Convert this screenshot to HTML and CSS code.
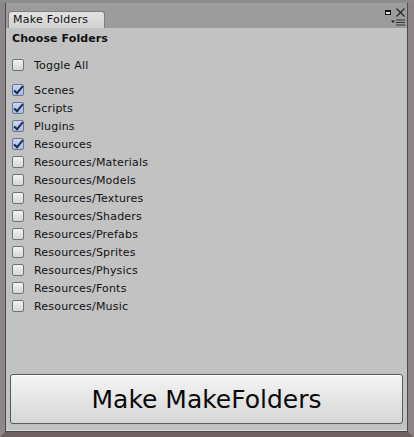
FILE: index.html
```html
<!DOCTYPE html>
<html>
<head>
<meta charset="utf-8">
<link rel="stylesheet" href="styles.css">
</head>
<body>
<div class="window">
  <div class="tabbar">
    <div class="tab">Make Folders</div>
    <div class="controls">
      <div class="ctl-top">
        <span class="max"></span>
        <svg class="close" width="9" height="9" viewBox="0 0 9 9"><path d="M0.5 0.5L8.5 8.5M8.5 0.5L0.5 8.5" stroke="#222" stroke-width="1.1"/></svg>
      </div>
      <svg class="menu" width="14" height="7" viewBox="0 0 14 7"><path d="M0 1.5h4l-2 2.5z" fill="#222"/><path d="M5 1h9M5 3.5h9M5 6h9" stroke="#333" stroke-width="1"/></svg>
    </div>
  </div>
  <div class="content">
    <div class="title">Choose Folders</div>
    <div class="row toggle"><span class="cb"></span><span>Toggle All</span></div>
    <div class="list">
      <div class="row"><span class="cb on"></span><span>Scenes</span></div>
      <div class="row"><span class="cb on"></span><span>Scripts</span></div>
      <div class="row"><span class="cb on"></span><span>Plugins</span></div>
      <div class="row"><span class="cb on"></span><span>Resources</span></div>
      <div class="row"><span class="cb"></span><span>Resources/Materials</span></div>
      <div class="row"><span class="cb"></span><span>Resources/Models</span></div>
      <div class="row"><span class="cb"></span><span>Resources/Textures</span></div>
      <div class="row"><span class="cb"></span><span>Resources/Shaders</span></div>
      <div class="row"><span class="cb"></span><span>Resources/Prefabs</span></div>
      <div class="row"><span class="cb"></span><span>Resources/Sprites</span></div>
      <div class="row"><span class="cb"></span><span>Resources/Physics</span></div>
      <div class="row"><span class="cb"></span><span>Resources/Fonts</span></div>
      <div class="row"><span class="cb"></span><span>Resources/Music</span></div>
    </div>
    <div class="spacer"></div>
    <div class="btn">Make MakeFolders</div>
  </div>
</div>
</body>
</html>
```
FILE: styles.css
```css
html, body { margin: 0; padding: 0; }
body { width: 414px; height: 437px; overflow: hidden; background: #7c7274; }

.window {
  box-sizing: border-box;
  width: 414px;
  height: 437px;
  display: flex;
  flex-direction: column;
  background: #8a8487;
  border-top: 3px solid #8c8c8c;
  border-left: 5px solid #8d878b;
  border-right: 6px solid #8e8487;
  border-bottom: 5px solid #6f6162;
  font-family: "DejaVu Sans", Verdana, sans-serif;
  color: #111;
}

.tabbar {
  height: 25px;
  background: #9c9c9c;
  border-left: 1px solid #4a4a4a;
  border-right: 1px solid #4a4a4a;
  display: flex;
  align-items: flex-end;
  padding-left: 2px;
  position: relative;
}

.tab {
  box-sizing: border-box;
  width: 97px;
  height: 17px;
  background: linear-gradient(#e2e2e2, #d2d2d2);
  border: 1px solid #7e7e7e;
  border-bottom: none;
  border-radius: 3px 3px 0 0;
  font-size: 11px;
  line-height: 16px;
  padding-left: 4px;
  letter-spacing: 0.25px;
  color: #111;
}

.controls {
  position: absolute;
  right: 2px;
  top: 5px;
  width: 22px;
  display: flex;
  flex-direction: column;
  align-items: flex-end;
  gap: 2px;
}
.ctl-top { display: flex; align-items: center; gap: 5px; }
.max {
  display: block;
  box-sizing: border-box;
  width: 6px;
  height: 5px;
  border: 1px solid #111;
  border-top-width: 2px;
  background: #ddd;
}
.close { display: block; }
.menu { display: block; }

.content {
  flex: 1;
  background: #c2c2c2;
  border-left: 1px solid #4a4a4a;
  border-right: 1px solid #4a4a4a;
  border-bottom: 1px solid #4a4a4a;
  display: flex;
  flex-direction: column;
  padding: 3px 4px 7px 3px;
  box-shadow: inset 0 -1px 0 #dcdcdc;
}

.title {
  font-weight: bold;
  font-size: 11px;
  line-height: 16px;
  padding-left: 3px;
  letter-spacing: 0.1px;
}

.row {
  display: flex;
  align-items: center;
  height: 18px;
  font-size: 11px;
  padding-left: 3px;
  letter-spacing: 0.2px;
}
.toggle { margin-top: 9px; margin-bottom: 7px; }

.cb {
  box-sizing: border-box;
  width: 12px;
  height: 12px;
  margin-right: 10px;
  border: 1px solid #737373;
  border-radius: 2px;
  background: linear-gradient(#f2f2f2, #d6d6d6);
  position: relative;
}
.cb.on {
  background: linear-gradient(#c9d6ee, #a8bde3);
  border-color: #6c7690;
}
.cb.on::after {
  content: "";
  position: absolute;
  left: 3px;
  top: -1px;
  width: 3px;
  height: 8px;
  border-right: 2px solid #1c2a55;
  border-bottom: 2px solid #1c2a55;
  transform: rotate(40deg);
}

.spacer { flex: 1; }

.btn {
  box-sizing: border-box;
  height: 50px;
  margin: 0 0 0 1px;
  border: 1px solid #595959;
  border-radius: 3px;
  background: linear-gradient(#f4f4f4, #d6d6d6);
  display: flex;
  align-items: center;
  justify-content: center;
  font-size: 25px;
  color: #0a0a0a;
  box-shadow: inset 0 1px 0 #fff;
}
```
